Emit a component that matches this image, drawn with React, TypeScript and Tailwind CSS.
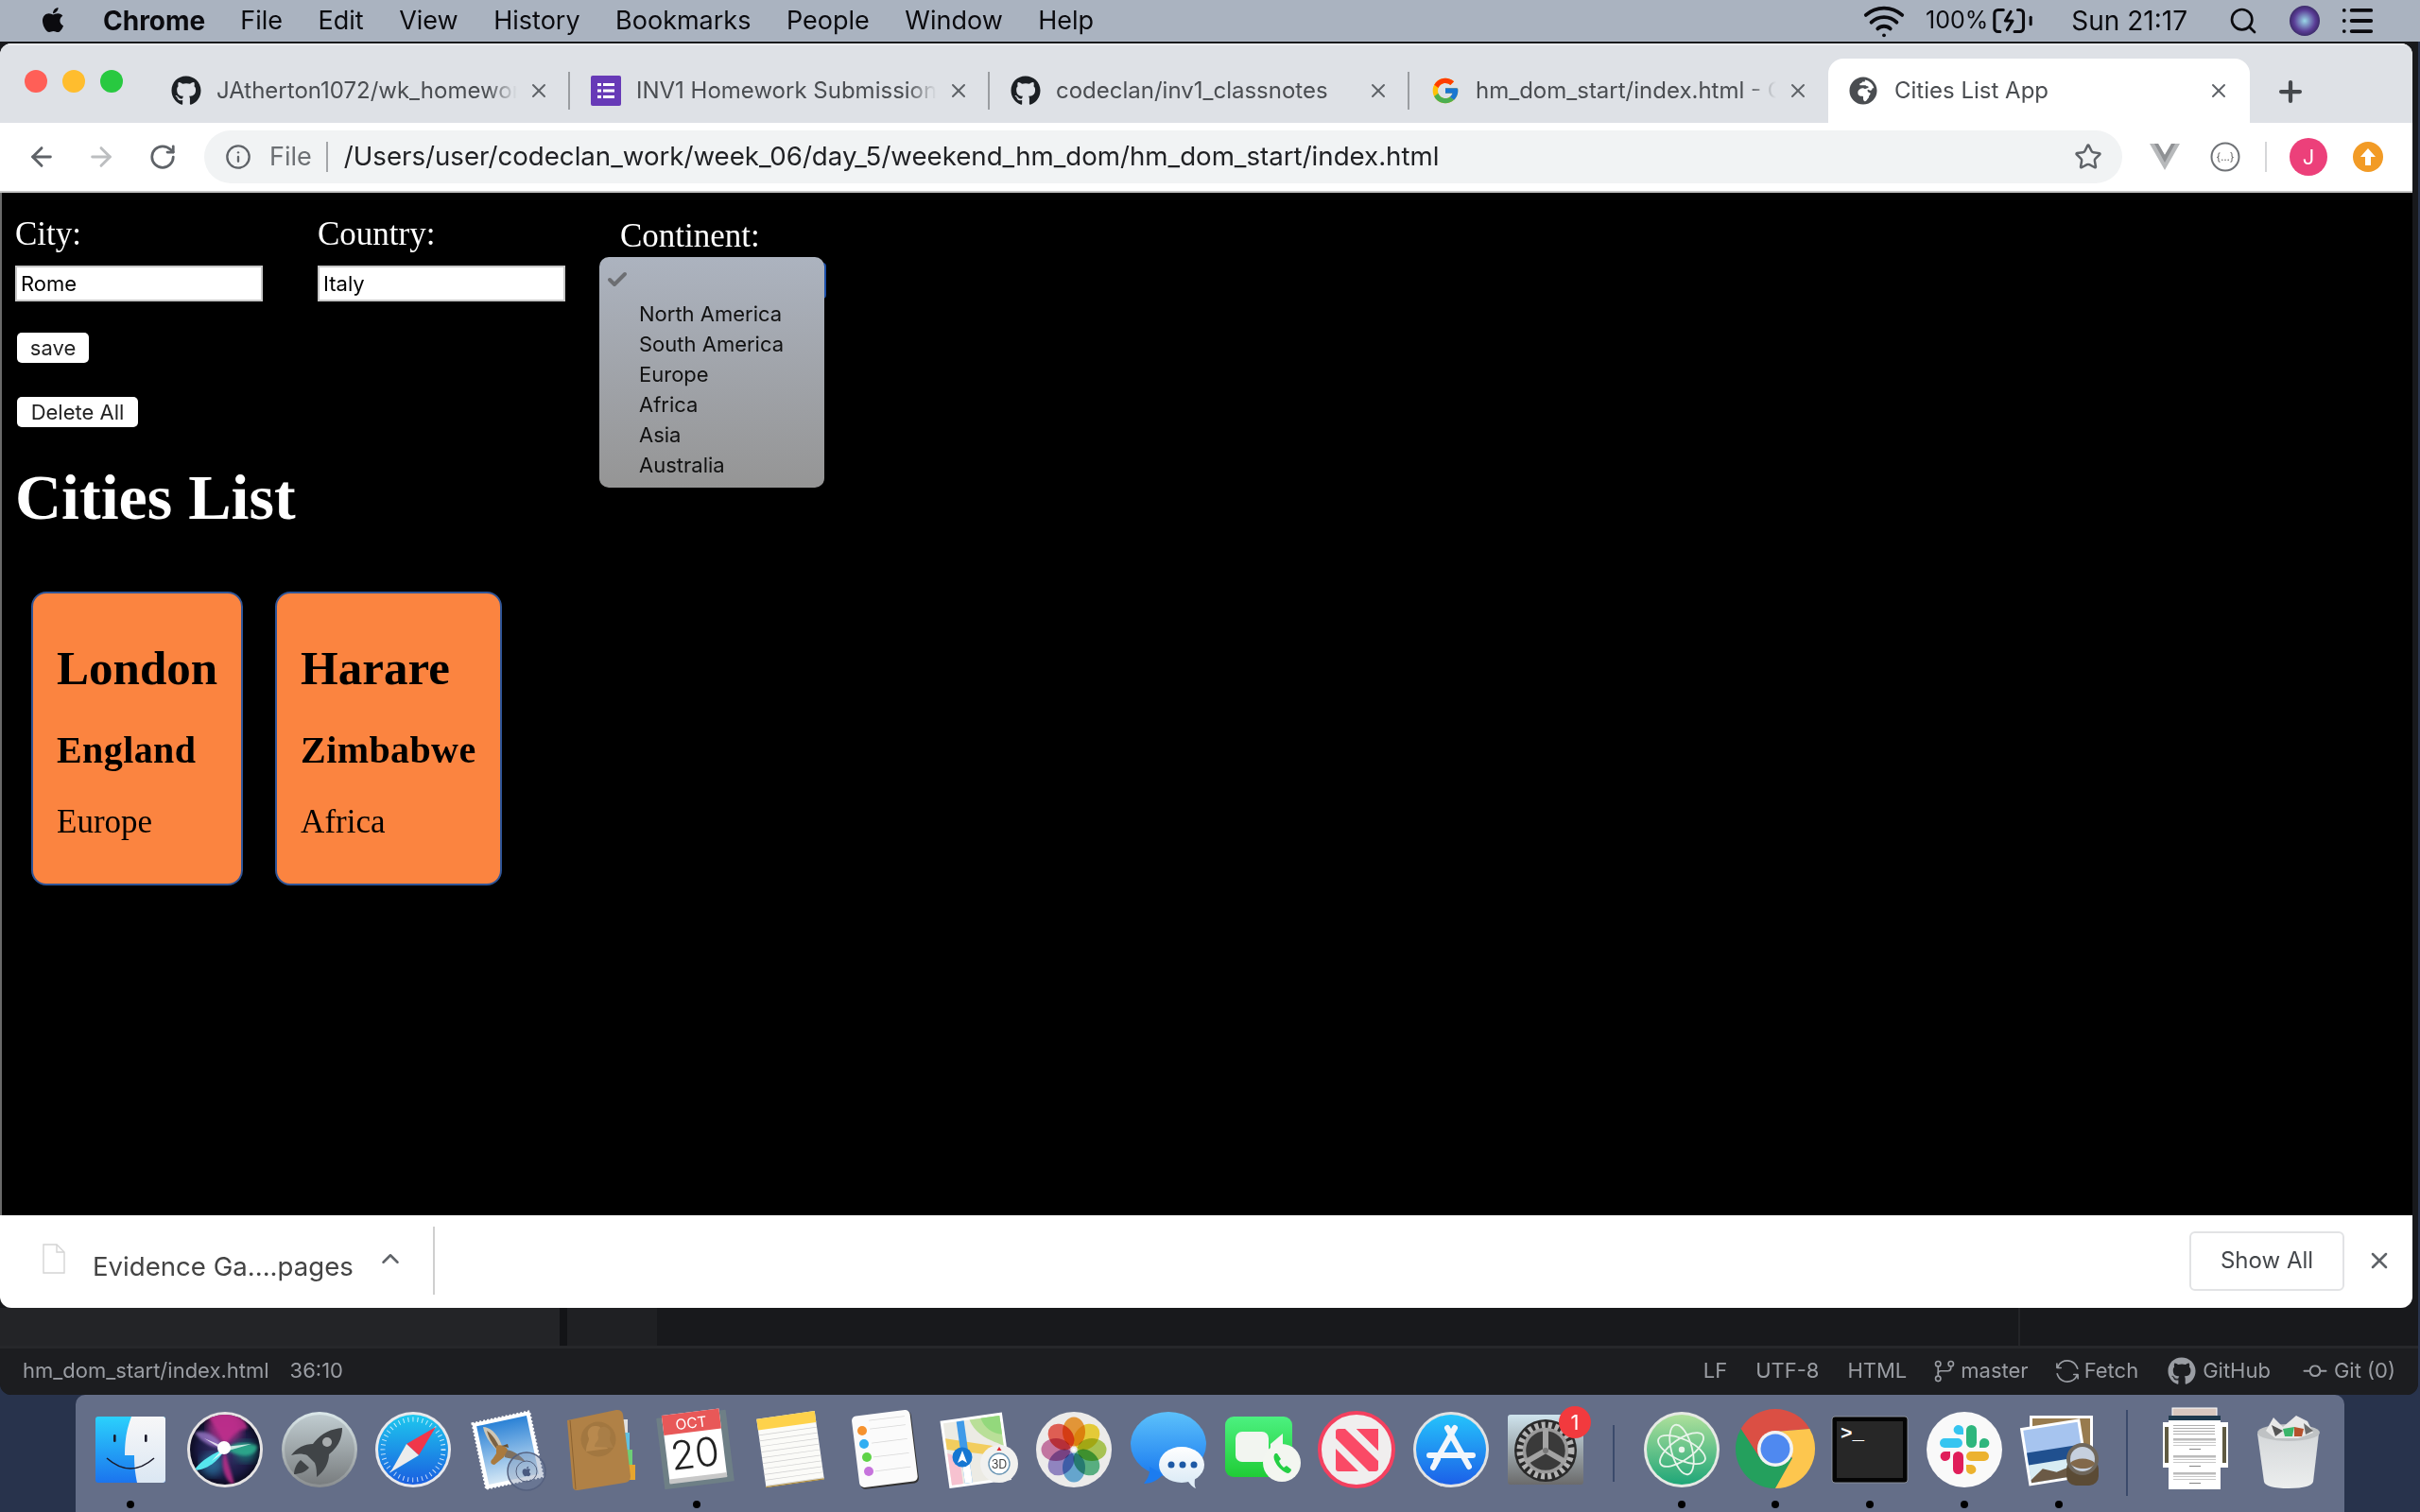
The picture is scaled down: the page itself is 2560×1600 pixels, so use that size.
import { ReactNode } from 'react';
import { ArrowLeft, ArrowRight, BatteryCharging, Check, ChevronUp, Info, List, Plus, RotateCw, Search, Star, Wifi, X } from 'lucide-react';
import { FaApple, FaGithub, FaGlobeAfrica } from 'react-icons/fa';
import { FcGoogle } from 'react-icons/fc';
import { GoGitBranch, GoGitCommit, GoSync } from 'react-icons/go';

const menuItems = ['File', 'Edit', 'View', 'History', 'Bookmarks', 'People', 'Window', 'Help'];
const continents = ['North America', 'South America', 'Europe', 'Africa', 'Asia', 'Australia'];
const cities = [
  { city: 'London', country: 'England', continent: 'Europe' },
  { city: 'Harare', country: 'Zimbabwe', continent: 'Africa' },
];

function FormsIcon() {
  return (
    <svg width="32" height="32" viewBox="0 0 32 32">
      <rect width="32" height="32" rx="2" fill="#673ab7" />
      <rect x="7" y="8" width="4" height="3" fill="#fff" />
      <rect x="13" y="8" width="12" height="3" fill="#fff" />
      <rect x="7" y="14.5" width="4" height="3" fill="#fff" />
      <rect x="13" y="14.5" width="12" height="3" fill="#fff" />
      <rect x="7" y="21" width="4" height="3" fill="#fff" />
      <rect x="13" y="21" width="12" height="3" fill="#fff" />
    </svg>
  );
}

function Tab({ icon, title, sep = true }: { icon: ReactNode; title: string; sep?: boolean }) {
  return (
    <div className="flex items-center w-[444px] h-[68px] shrink-0">
      <div className="w-[22px]" />
      <div className="w-[32px] h-[32px] flex items-center justify-center shrink-0">{icon}</div>
      <div className="w-[318px] ml-[16px] text-[#4a4d51] text-[24px] whitespace-nowrap overflow-hidden [mask-image:linear-gradient(to_right,#000_90%,transparent)]">{title}</div>
      <X size={24} strokeWidth={2} className="ml-[11px] text-[#5f6368] shrink-0" />
      <div className="flex-1" />
      {sep && <div className="w-[2px] h-[40px] bg-[#9a9da1]" />}
    </div>
  );
}

function DockSlot({ dot, children }: { dot?: boolean; children: ReactNode }) {
  return (
    <div className="w-[99.8px] shrink-0 flex flex-col items-center">
      <svg width="100" height="100" viewBox="0 0 100 100" className="overflow-visible">{children}</svg>
      {dot && <div className="mt-[4px] w-[8px] h-[8px] rounded-full bg-black" />}
    </div>
  );
}

function Dock() {
  return (
    <div className="ml-[80px] w-[2400px] h-[124px] bg-[#646e88] rounded-t-[10px] pl-[8px] pt-[8px] flex">
      <DockSlot dot>
        <defs>
          <linearGradient id="fa" x1="0" y1="0" x2="0" y2="1"><stop offset="0" stopColor="#2bd1fc" /><stop offset="1" stopColor="#1b74ee" /></linearGradient>
          <linearGradient id="fb" x1="0" y1="0" x2="0" y2="1"><stop offset="0" stopColor="#f7f7f8" /><stop offset="1" stopColor="#dbe7f3" /></linearGradient>
        </defs>
        <rect x="13" y="15" width="74" height="70" rx="3" fill="url(#fa)" />
        <path d="M51 15H84a3 3 0 0 1 3 3V82a3 3 0 0 1-3 3H57C55 75 54 68 54 56H44C44 40 46 28 51 15Z" fill="url(#fb)" />
        <rect x="32" y="34" width="2.6" height="8" rx="1.3" fill="#1a1a2a" />
        <rect x="65" y="34" width="2.6" height="8" rx="1.3" fill="#1a1a2a" />
        <path d="M25 59Q50 81 75 59" fill="none" stroke="#1a1a2a" strokeWidth="1.6" />
      </DockSlot>
      <DockSlot>
        <defs>
          <radialGradient id="sa"><stop offset="0" stopColor="#3d3570" /><stop offset="0.75" stopColor="#1b1a44" /><stop offset="1" stopColor="#0c0c22" /></radialGradient>
          <filter id="sb"><feGaussianBlur stdDeviation="1.6" /></filter>
          <filter id="sc"><feGaussianBlur stdDeviation="0.7" /></filter>
          <filter id="se"><feGaussianBlur stdDeviation="5" /></filter>
          <clipPath id="sd"><circle cx="50" cy="50" r="37" /></clipPath>
        </defs>
        <circle cx="50" cy="50" r="40" fill="#e6e4e4" />
        <circle cx="50" cy="50" r="37" fill="url(#sa)" />
        <g clipPath="url(#sd)">
          <circle cx="50" cy="26" r="18" fill="#c0308f" opacity=".8" filter="url(#se)" />
          <circle cx="72" cy="52" r="11" fill="#1f8f80" opacity=".7" filter="url(#se)" />
          <circle cx="36" cy="66" r="12" fill="#2a7fa8" opacity=".7" filter="url(#se)" />
          <path d="M28 10C50 6 72 14 74 28C62 28 54 38 50 48C46 34 38 22 28 10Z" fill="#bf2f8c" opacity=".85" filter="url(#sb)" />
          <path d="M18 32C30 28 42 36 49 48C38 48 26 44 18 32Z" fill="#9a78c8" opacity=".8" filter="url(#sb)" />
          <path d="M50 49C60 42 74 42 84 46C84 58 66 60 50 49Z" fill="#2fb08f" opacity=".85" filter="url(#sb)" />
          <path d="M50 51C52 62 58 76 60 88C50 84 44 66 50 51Z" fill="#b62d87" opacity=".9" filter="url(#sb)" />
          <path d="M50 49C38 54 26 60 17 72C30 72 44 62 50 49Z" fill="#56e6ee" filter="url(#sc)" />
          <path d="M28 38L49 47L78 44L50 52L36 62L47 50Z" fill="#fff" opacity=".75" filter="url(#sc)" />
          <circle cx="49" cy="48" r="7" fill="#fff" filter="url(#sc)" />
        </g>
      </DockSlot>
      <DockSlot>
        <defs>
          <linearGradient id="la" x1="0" y1="0" x2="0" y2="1"><stop offset="0" stopColor="#dbe8ea" /><stop offset="1" stopColor="#8a8e90" /></linearGradient>
          <linearGradient id="lb" x1="0" y1="0" x2="0" y2="1"><stop offset="0" stopColor="#c0ccd0" /><stop offset="1" stopColor="#797d7f" /></linearGradient>
        </defs>
        <circle cx="50" cy="50" r="40" fill="url(#la)" />
        <circle cx="50" cy="50" r="37" fill="url(#lb)" />
        <path d="M74 27C62 28 51 33 43 44C34 44 26 48 20 56C26 54 32 54 37 56L45 64C47 69 47 74 47 79C55 73 60 64 60 55C70 47 74 38 74 27Z" fill="#404447" />
        <path d="M30 61C25 65 23 72 23 76C28 76 35 74 39 69Z" fill="#404447" />
        <circle cx="58" cy="42" r="5" fill="#a8acae" />
      </DockSlot>
      <DockSlot>
        <defs>
          <linearGradient id="saf" x1="0" y1="0" x2="0" y2="1"><stop offset="0" stopColor="#1ec8ee" /><stop offset="1" stopColor="#1a5ee0" /></linearGradient>
        </defs>
        <circle cx="50" cy="50" r="40" fill="#e9e9ec" />
        <circle cx="50" cy="50" r="37" fill="url(#saf)" />
        <circle cx="50" cy="50" r="32" fill="none" stroke="#fff" strokeWidth="5" strokeDasharray="1 4" opacity=".75" />
        <polygon points="74,26 43,44 56,56" fill="#f0364a" />
        <polygon points="26,74 43,44 56,56" fill="#ececec" />
      </DockSlot>
      <DockSlot>
        <defs>
          <linearGradient id="ma" x1="0" y1="0" x2="0" y2="1"><stop offset="0" stopColor="#2b82d6" /><stop offset="1" stopColor="#d4e7f5" /></linearGradient>
        </defs>
        <g transform="rotate(-12 50 50)">
          <rect x="19" y="15" width="62" height="71" fill="#fff" stroke="#fff" strokeWidth="2" strokeDasharray="2 2" />
          <rect x="23" y="19" width="54" height="63" fill="url(#ma)" />
        </g>
        <path d="M24 26C32 26 40 34 44 46L38 50C32 44 26 36 24 26Z" fill="#cfc6b4" />
        <path d="M28 30C33 33 38 40 41 47L38 49C33 43 30 37 28 30Z" fill="#7a6244" />
        <path d="M46 50C54 50 62 54 69 63C60 60 54 60 47 58Z" fill="#7f7160" />
        <path d="M38 46C42 44 48 46 50 50L46 58L36 66C32 66 31 62 34 60L38 54Z" fill="#a97a3f" />
        <path d="M44 46L50 44L51 48Z" fill="#6a5030" />
        <circle cx="70" cy="73" r="20" fill="#7388a8" fillOpacity=".35" stroke="#55617f" strokeWidth="1.5" />
        <circle cx="70" cy="73" r="11" fill="none" stroke="#55617f" strokeWidth="1" />
        <FaApple x="64" y="67" size="12" color="#4a5a80" />
      </DockSlot>
      <DockSlot>
        <rect x="68" y="18" width="9" height="14" fill="#e0e0e0" />
        <rect x="70" y="32" width="9" height="18" fill="#62c1e0" />
        <rect x="72" y="50" width="10" height="16" fill="#6dcf76" />
        <rect x="74" y="66" width="11" height="16" fill="#e6a52e" />
        <path d="M13 19L65 8Q71 7.5 72 13L80 78Q80 84 74 85L24 93Q20 93.5 19 90Z" fill="#b08146" />
        <path d="M16 19L22 92" stroke="#8c6230" strokeWidth="1" />
        <circle cx="46" cy="39" r="18.5" fill="#a27740" />
        <path d="M33 52C33 44 36 42 36 38C32 30 38 24 43 25C49 24 52 31 49 38C50 44 55 46 56 49Z" fill="#b8894e" />
        <path d="M42 47C42 42 46 42 46 37C44 30 48 25 53 26C58 27 60 32 58 38C58 42 61 45 62 48Z" fill="#a97e47" />
      </DockSlot>
      <DockSlot dot>
        <g transform="rotate(-7 48 46)">
          <rect x="11" y="12" width="74" height="76" rx="1" fill="#6e7f86" />
          <rect x="17" y="10" width="61" height="72" fill="#fff" />
          <rect x="17" y="78" width="61" height="5" fill="#c8c8c8" />
          <rect x="17" y="10" width="61" height="21" fill="#e85858" />
          <text x="47" y="27" textAnchor="middle" fontSize="15.5" fill="#fff" fontFamily="Inter, sans-serif">OCT</text>
          <text x="47" y="69" textAnchor="middle" fontSize="42" fontWeight="300" fill="#222" fontFamily="Inter, sans-serif">20</text>
        </g>
      </DockSlot>
      <DockSlot>
        <g transform="rotate(-8 50 49)">
          <rect x="19" y="13" width="62" height="73" fill="#fbfbf8" />
          <rect x="19" y="13" width="62" height="12" fill="#fed24b" />
          {[30, 36, 42, 48, 54, 60, 66, 72, 78, 84].map(y => (
            <rect key={y} x="19" y={y} width="62" height="0.7" fill="#cfcfcf" />
          ))}
          <rect x="19" y="85" width="62" height="1.3" fill="#b08e3e" />
        </g>
      </DockSlot>
      <DockSlot>
        <g transform="rotate(-7 50 50)">
          <rect x="20" y="12" width="62" height="77" rx="5" fill="#333" />
          <rect x="19" y="11" width="62" height="76" rx="5" fill="#fbfbfb" />
          {[26, 41, 56, 71].map(y => (
            <rect key={y} x="37" y={y} width="38" height="0.8" fill="#d8d8d8" />
          ))}
          <rect x="37" y="17" width="38" height="0.8" fill="#d8d8d8" />
        </g>
        <circle cx="26" cy="30" r="5" fill="#f6922e" />
        <circle cx="28" cy="44" r="5" fill="#32aef2" />
        <circle cx="31" cy="58" r="5" fill="#5fd348" />
        <circle cx="33" cy="73" r="5" fill="#c674dc" />
      </DockSlot>
      <DockSlot>
        <g transform="rotate(-8 45 50)">
          <rect x="13" y="15" width="66" height="72" fill="#fff" />
          <rect x="16" y="18" width="60" height="66" fill="#ecebe4" />
          <path d="M16 34L76 52V62L16 46Z" fill="#f2cd5e" />
          <rect x="30" y="18" width="8" height="66" fill="#3f9ae8" />
          <rect x="30" y="58" width="8" height="26" fill="#fff" />
          <path d="M16 50L28 56V84H16Z" fill="#f7c2d0" />
          <path d="M44 18H76V50C66 44 48 36 44 18Z" fill="#b9df98" />
          <path d="M56 18H76V38C66 36 58 28 56 18Z" fill="#93d87c" />
        </g>
        <circle cx="32" cy="58" r="10.5" fill="#1677d2" />
        <path d="M32 51L37 64L32 61L27 64Z" fill="#fff" />
        <circle cx="71" cy="65" r="20" fill="#f1f1ef" />
        <circle cx="71" cy="65" r="11" fill="#fff" stroke="#6a96b5" strokeWidth="1.4" />
        <text x="71" y="70" textAnchor="middle" fontSize="12.5" fill="#444" fontFamily="Inter, sans-serif">3D</text>
        <polygon points="71,47 68.5,51 73.5,51" fill="#e0242c" />
      </DockSlot>
      <DockSlot>
        <circle cx="50" cy="50" r="40" fill="#ecebea" />
        <g>
          {[
            ['#f5a23c', 0],
            ['#f7dc3d', 45],
            ['#b5d35a', 90],
            ['#5fbd8c', 135],
            ['#6db3e0', 180],
            ['#9c8fd0', 225],
            ['#d27fae', 270],
            ['#f0665a', 315],
          ].map(([c, a]) => (
            <ellipse key={a as number} cx="50" cy="31" rx="12" ry="15.5" fill={c as string} className="mix-blend-multiply" transform={`rotate(${a} 50 50)`} />
          ))}
        </g>
        <circle cx="50" cy="50" r="1.6" fill="#fff" />
      </DockSlot>
      <DockSlot>
        <defs>
          <linearGradient id="msg" x1="0" y1="0" x2="0" y2="1"><stop offset="0" stopColor="#5cc1fb" /><stop offset="1" stopColor="#1c7cf0" /></linearGradient>
          <linearGradient id="msh" x1="0" y1="0" x2="0" y2="1"><stop offset="0" stopColor="#ffffff" /><stop offset="1" stopColor="#dcebf6" /></linearGradient>
        </defs>
        <ellipse cx="50" cy="44" rx="40" ry="34" fill="url(#msg)" />
        <path d="M30 68C31 78 26 83 24 86C32 86 40 82 44 76Z" fill="#1c7cf0" />
        <ellipse cx="64" cy="66" rx="24" ry="19" fill="url(#msh)" />
        <path d="M70 82C72 86 76 90 79 91C77 87 78 84 78 80Z" fill="#e0edf7" />
        <circle cx="53" cy="66" r="3.5" fill="#1d59a5" />
        <circle cx="65" cy="66" r="3.5" fill="#1d59a5" />
        <circle cx="77" cy="66" r="3.5" fill="#1d59a5" />
      </DockSlot>
      <DockSlot>
        <defs>
          <linearGradient id="ft" x1="0" y1="0" x2="0" y2="1"><stop offset="0" stopColor="#4cf180" /><stop offset="1" stopColor="#20cc36" /></linearGradient>
        </defs>
        <rect x="11" y="15" width="71" height="64" rx="9" fill="url(#ft)" />
        <rect x="22" y="31" width="35" height="32" rx="7" fill="#f2f5f0" />
        <path d="M59 44L72 33V60L59 52Z" fill="#f2f5f0" />
        <circle cx="71" cy="64" r="20" fill="#f3f6f0" />
        <path d="M64 54C62 56 62 59 64 63C67 69 72 73 77 75C79 75 81 73 81 71L76 67L73 69C71 67 69 65 68 62L70 60L66 54Z" fill="#25cf44" />
      </DockSlot>
      <DockSlot>
        <circle cx="50" cy="50" r="39" fill="#f0eeee" stroke="#f4405f" strokeWidth="4" />
        <rect x="28" y="28" width="45" height="45" rx="3" fill="#fa4a66" />
        <path d="M28 38L63 73H52L28 49Z" fill="#f0eeee" />
        <path d="M38 28H50L73 51V62Z" fill="#f0eeee" />
        <path d="M50 28L73 51V28Z" fill="#fa4a66" />
      </DockSlot>
      <DockSlot>
        <defs>
          <linearGradient id="as" x1="0" y1="0" x2="0" y2="1"><stop offset="0" stopColor="#25c3fb" /><stop offset="1" stopColor="#1c60e8" /></linearGradient>
        </defs>
        <circle cx="50" cy="50" r="40" fill="#e2e2e2" />
        <circle cx="50" cy="50" r="37" fill="url(#as)" />
        <g stroke="#f2f6fb" strokeWidth="6" strokeLinecap="round" fill="none">
          <path d="M54 27L34 62" />
          <path d="M46 27L69 68" />
          <path d="M27 56H73" />
          <path d="M36 60L31 69" />
        </g>
      </DockSlot>
      <DockSlot>
        <defs>
          <linearGradient id="sp" x1="0" y1="0" x2="0" y2="1"><stop offset="0" stopColor="#cfe4ee" /><stop offset="1" stopColor="#6b6b6b" /></linearGradient>
        </defs>
        <rect x="10" y="13" width="80" height="74" rx="3" fill="url(#sp)" />
        <circle cx="50" cy="51" r="33" fill="#2a2a2a" />
        <circle cx="50" cy="51" r="27" fill="none" stroke="#b5b5b5" strokeWidth="7" strokeDasharray="4 3.2" />
        <circle cx="50" cy="51" r="22.5" fill="#3a3a3a" stroke="#9a9a9a" strokeWidth="3.5" />
        <g stroke="#a3a3a3" strokeWidth="6" strokeLinecap="round">
          <path d="M50 51V30" />
          <path d="M50 51L31 62" />
          <path d="M50 51L69 62" />
        </g>
        <circle cx="50" cy="51" r="3" fill="#777" />
        <circle cx="81" cy="21" r="17" fill="#f23a3e" />
        <text x="81" y="29" textAnchor="middle" fontSize="22" fill="#fff" fontFamily="Inter, sans-serif">1</text>
      </DockSlot>
      <div className="w-[44px] shrink-0 flex justify-center pt-[24px]">
        <div className="w-[2px] h-[60px] bg-[#3b4a6b]" />
      </div>
      <DockSlot dot>
        <defs>
          <linearGradient id="at" x1="0" y1="0" x2="0" y2="1"><stop offset="0" stopColor="#aee09b" /><stop offset="1" stopColor="#1fa678" /></linearGradient>
        </defs>
        <circle cx="50" cy="50" r="40" fill="#e6e9e4" />
        <circle cx="50" cy="50" r="37" fill="url(#at)" />
        <g fill="none" stroke="#e8f4ea" strokeWidth="1.8">
          <ellipse cx="50" cy="50" rx="27" ry="11" transform="rotate(25 50 50)" />
          <ellipse cx="50" cy="50" rx="27" ry="11" transform="rotate(-35 50 50)" />
          <ellipse cx="50" cy="50" rx="27" ry="11" transform="rotate(75 50 50)" />
        </g>
        <circle cx="50" cy="50" r="3.2" fill="#e8f4ea" />
      </DockSlot>
      <DockSlot dot>
        <path d="M13.6 28A42 42 0 0 1 86.4 28L50 31L33 58Z" fill="#db4f44" />
        <path d="M13.6 28L33 58L68 59L50 91A42 42 0 0 1 13.6 28Z" fill="#24a05d" />
        <path d="M86.4 28L50 31L68 59L50 91A42 42 0 0 0 86.4 28Z" fill="#fdc64e" />
        <circle cx="50" cy="49" r="19" fill="#f3f3f3" />
        <circle cx="50" cy="49" r="15.5" fill="#4f89f0" />
      </DockSlot>
      <DockSlot dot>
        <rect x="10" y="15" width="80" height="70" rx="3" fill="#050505" stroke="#9aa0a8" strokeWidth="0.8" />
        <rect x="15" y="20" width="70" height="60" fill="#272727" />
        <text x="19" y="39" fontSize="21" fontWeight="700" fill="#fff" fontFamily="'Liberation Mono', monospace">&gt;_</text>
      </DockSlot>
      <DockSlot dot>
        <circle cx="50" cy="50" r="40" fill="#f9f9f9" />
        <rect x="24" y="38" width="24" height="10" rx="5" fill="#36c5f0" />
        <path d="M49 34H43.5a5.2 5 0 1 1 5.5-5Z" fill="#36c5f0" />
        <rect x="52" y="24" width="11" height="24" rx="5.5" fill="#2eb67d" />
        <path d="M66 48V43a5.2 5 0 1 1 5 5Z" fill="#2eb67d" />
        <path d="M35 52V57a5.2 5 0 1 1-5-5Z" fill="#e01e5a" />
        <rect x="38" y="52" width="11" height="24" rx="5.5" fill="#e01e5a" />
        <rect x="52" y="52" width="24" height="10" rx="5" fill="#ecb22e" />
        <path d="M52 66H57.5a5.2 5 0 1 1-5.5 5Z" fill="#ecb22e" />
      </DockSlot>
      <DockSlot dot>
        <rect x="19" y="14" width="67" height="60" fill="#fff" />
        <rect x="22" y="17" width="61" height="54" fill="#a78a58" />
        <rect x="22" y="17" width="61" height="54" fill="#6b5030" fillOpacity=".25" />
        <g transform="rotate(-9 45 51)">
          <rect x="13" y="22" width="64" height="62" fill="#fff" />
          <rect x="16" y="25" width="58" height="56" fill="#a6c4ef" />
          <rect x="16" y="49" width="58" height="14" fill="#20508f" />
          <rect x="16" y="62" width="58" height="19" fill="#d8ecf3" />
          <path d="M16 78L30 68L44 74L60 70L74 78V81H16Z" fill="#6b5a46" />
        </g>
        <rect x="58" y="60" width="34" height="28" rx="10" fill="#5b4b35" />
        <circle cx="75" cy="60" r="17" fill="#6f675c" />
        <circle cx="75" cy="60" r="13" fill="#c6d0de" />
        <path d="M62 64C68 58 82 58 88 64C86 72 66 72 62 64Z" fill="#82684a" />
      </DockSlot>
      <div className="w-[44px] shrink-0 flex justify-center pt-[8px]">
        <div className="w-[2px] h-[91px] bg-[#3b4a6b]" />
      </div>
      <DockSlot>
        <rect x="26" y="6" width="47" height="14" fill="#d9c8bf" stroke="#fff" />
        <rect x="16" y="21" width="69" height="48" fill="#fff" />
        <rect x="18" y="26" width="4" height="38" fill="#5f5a42" />
        <rect x="79" y="26" width="4" height="38" fill="#5f5a42" />
        <rect x="22" y="14" width="55" height="5" fill="#1f3a4d" />
        <rect x="22" y="19" width="55" height="73" fill="#fff" />
        {[24, 27, 30, 33].map(y => (
          <rect key={y} x="27" y={y} width="44" height="0.8" fill="#9a9a9a" />
        ))}
        {[38, 56, 74].map(y => (
          <g key={y}>
            <rect x="27" y={y} width="45" height="2.5" fill="#bbb" />
            <rect x="27" y={y + 4} width="45" height="0.8" fill="#bbb" />
            <rect x="27" y={y + 7} width="45" height="0.8" fill="#bbb" />
            <rect x="44" y={y + 11} width="12" height="0.9" fill="#777" />
          </g>
        ))}
      </DockSlot>
      <DockSlot>
        <defs>
          <linearGradient id="tr" x1="0" y1="0" x2="0" y2="1"><stop offset="0" stopColor="#d5d8da" /><stop offset="1" stopColor="#eceeee" /></linearGradient>
        </defs>
        <path d="M17 33L24 84Q26 91 50 91Q74 91 76 84L82 33Z" fill="url(#tr)" />
        <ellipse cx="50" cy="32" rx="33" ry="9" fill="#bfc2c4" />
        <path d="M26 30L34 16L44 26L58 14L70 20L76 32L60 38L36 38Z" fill="#e8e8e8" />
        <path d="M32 24L44 30L36 36Z" fill="#555" />
        <path d="M44 28L56 26L54 36L46 36Z" fill="#3bb56a" />
        <path d="M56 26L66 28L64 36L56 36Z" fill="#b5522d" />
        <path d="M66 22L76 30L68 34Z" fill="#6a6a6a" />
      </DockSlot>
    </div>
  );
}

function CityCard({ city, country, continent }: { city: string; country: string; continent: string }) {
  return (
    <div className="h-[311px] rounded-[16px] border-[2px] border-[#2f5597] bg-[#fb8440] px-[25px] text-black">
      <h2 className="mt-[49px] text-[51px] leading-[60px] font-bold">{city}</h2>
      <h3 className="mt-[34px] text-[40px] leading-[46px] font-bold tracking-[0.4px]">{country}</h3>
      <p className="mt-[32px] text-[35px] leading-[42px]">{continent}</p>
    </div>
  );
}

export default function App() {
  return (
    <div className="w-[2560px] h-[1600px] overflow-hidden bg-[#28334c] [font-family:Inter,sans-serif]">
      <div className="h-[44px] bg-[#aab3c0] flex items-center text-[#0b0b0f] text-[27px]">
        <FaApple size={30} className="ml-[41px] mb-[3px]" />
        <div className="ml-[38px] font-bold text-[28px]">Chrome</div>
        <div className="ml-[37px] flex gap-[37.5px]">
          {menuItems.map(item => <span key={item}>{item}</span>)}
        </div>
        <div className="flex-1" />
        <Wifi size={46} strokeWidth={2} />
        <span className="ml-[21px] text-[25px]">100%</span>
        <BatteryCharging size={46} strokeWidth={1.6} className="ml-[3px]" />
        <span className="ml-[39px] text-[28px]">Sun 21:17</span>
        <Search size={32} strokeWidth={2} className="ml-[43px]" />
        <div className="ml-[33px] w-[32px] h-[32px] rounded-full bg-[radial-gradient(circle,#9ad8e8,#5a3d96_50%,#11122c)]" />
        <List size={38} strokeWidth={2.4} className="ml-[21px] mr-[47px]" />
      </div>

      <div className="h-[1432px] bg-[#18191c] rounded-b-[12px] mr-[2px]">
        <div className="h-[2px]" />
        <div className="w-[2552px] h-[1338px] rounded-t-[12px] rounded-b-[12px] overflow-hidden flex flex-col bg-white">
          <div className="h-[84px] bg-[#dee1e6] flex items-end border-t-[2px] border-[#eceef0]">
            <div className="w-[159px] h-full shrink-0 flex items-center gap-[16px] pl-[26px] pb-[6px]">
              <div className="w-[24px] h-[24px] rounded-full bg-[#ff5f57] shrink-0" />
              <div className="w-[24px] h-[24px] rounded-full bg-[#ffbd2e] shrink-0" />
              <div className="w-[24px] h-[24px] rounded-full bg-[#28c940] shrink-0" />
            </div>
            <Tab icon={<FaGithub size={32} color="#1b1f23" />} title="JAtherton1072/wk_homework" />
            <Tab icon={<FormsIcon />} title="INV1 Homework Submission" />
            <Tab icon={<FaGithub size={32} color="#1b1f23" />} title="codeclan/inv1_classnotes" />
            <Tab icon={<FcGoogle size={32} />} title="hm_dom_start/index.html - Google" sep={false} />
            <div className="w-[446px] h-[68px] -ml-[1px] bg-white rounded-t-[16px] flex items-center shrink-0">
              <div className="w-[22px]" />
              <FaGlobeAfrica size={30} color="#4a4d51" />
              <div className="ml-[18px] text-[#4a4d51] text-[24px]">Cities List App</div>
              <div className="flex-1" />
              <X size={24} strokeWidth={2} className="mr-[21px] text-[#5f6368]" />
            </div>
            <Plus size={34} strokeWidth={3} className="ml-[26px] mb-[16px] text-[#45484c]" />
          </div>

          <div className="h-[74px] flex items-center pl-[28px] border-b-[2px] border-[#c6c6c6]">
            <ArrowLeft size={32} strokeWidth={2.2} className="text-[#5f6368]" />
            <ArrowRight size={32} strokeWidth={2.2} className="ml-[31px] text-[#bcbec0]" />
            <RotateCw size={30} strokeWidth={2.2} className="ml-[34px] text-[#5f6368]" />
            <div className="ml-[29px] w-[2029px] h-[56px] rounded-full bg-[#f1f3f4] flex items-center pl-[22px]">
              <Info size={28} strokeWidth={2} className="text-[#5f6368]" />
              <span className="ml-[19px] text-[#6d7074] text-[27px]">File</span>
              <div className="ml-[15px] w-[2px] h-[32px] bg-[#a4a6a9]" />
              <span className="ml-[17px] text-[#202124] text-[27.65px] whitespace-nowrap">/Users/user/codeclan_work/week_06/day_5/weekend_hm_dom/hm_dom_start/index.html</span>
              <div className="flex-1" />
              <Star size={30} strokeWidth={2} className="mr-[21px] text-[#5f6368]" />
            </div>
            <svg width="32" height="32" viewBox="0 0 32 32" className="ml-[29px]">
              <polygon points="0,2 9,2 16,14 23,2 32,2 16,30" fill="#b7b9bb" />
              <polygon points="9,2 16,14 23,2 27,2 16,22 5,2" fill="#8f9194" />
            </svg>
            <svg width="32" height="32" viewBox="0 0 32 32" className="ml-[32px]">
              <circle cx="16" cy="16" r="14.5" fill="#fff" stroke="#6f7276" strokeWidth="2" />
              <text x="16" y="20" textAnchor="middle" fontSize="11" fill="#555" fontFamily="Inter, sans-serif">{'{…}'}</text>
            </svg>
            <div className="ml-[26px] w-[2px] h-[32px] bg-[#d6d7d9]" />
            <div className="ml-[24px] w-[40px] h-[40px] rounded-full bg-[#ec407a] flex items-center justify-center text-white text-[22px]">J</div>
            <div className="ml-[27px] w-[32px] h-[32px] rounded-full bg-[#f29b26] flex items-center justify-center">
              <svg width="18" height="20" viewBox="0 0 18 20"><path d="M9 1L17 10H12V19H6V10H1Z" fill="#fff" /></svg>
            </div>
          </div>

          <main className="relative h-[1082px] bg-black border-l-[2px] border-[#6a6a6a] pl-[14px] [font-family:'Liberation_Serif',serif] text-white">
            <div className="flex pt-[23px]">
              <div className="w-[320px]">
                <label className="block h-[42px] text-[35px] leading-[42px]">City:</label>
                <input readOnly value="Rome" className="mt-[12px] block w-[262px] h-[38px] bg-white border-[2px] border-[#c8c8c8] pl-[4px] text-black text-[22px] [font-family:Inter,sans-serif]" />
              </div>
              <div className="w-[320px]">
                <label className="block h-[42px] text-[35px] leading-[42px]">Country:</label>
                <input readOnly value="Italy" className="mt-[12px] block w-[262px] h-[38px] bg-white border-[2px] border-[#c8c8c8] pl-[4px] text-black text-[22px] [font-family:Inter,sans-serif]" />
              </div>
              <div className="mt-[2px]">
                <label className="block h-[42px] text-[35px] leading-[42px]">Continent:</label>
              </div>
            </div>
            <button className="mt-[33px] ml-[2px] block w-[76px] h-[32px] bg-white rounded-[5px] text-[#222] text-[22px] [font-family:Inter,sans-serif]">save</button>
            <button className="mt-[36px] ml-[2px] block w-[128px] h-[32px] bg-white rounded-[5px] text-[#222] text-[22px] [font-family:Inter,sans-serif]">Delete All</button>
            <h1 className="mt-[36px] text-[68px] leading-[76px] font-bold">Cities List</h1>
            <div className="mt-[62px] ml-[17px] flex gap-[34px] items-start">
              {cities.map(c => <CityCard key={c.city} {...c} />)}
            </div>

            <div className="absolute left-[865px] top-[74px] w-[7px] h-[38px] bg-[#1c4fa8] rounded-r-[4px]" />
            <div className="absolute left-[632px] top-[68px] w-[238px] h-[244px] rounded-[10px] bg-gradient-to-b from-[#acb3bf] to-[#959595] [font-family:Inter,sans-serif] text-[#111] text-[22px]">
              <div className="h-[44px] pl-[7px] pt-[4px] flex items-center text-[#6c6e72]"><Check size={24} strokeWidth={4} /></div>
              {continents.map(c => (
                <div key={c} className="h-[32px] leading-[32px] pl-[42px]">{c}</div>
              ))}
            </div>
          </main>

          <div className="h-[96px] bg-white flex items-center rounded-b-[12px]">
            <svg width="24" height="32" viewBox="0 0 24 32" className="ml-[45px] mb-[4px]">
              <path d="M1 1H15L23 9V31H1Z" fill="#fff" stroke="#d4d4d4" strokeWidth="1.4" />
              <path d="M15 1V9H23" fill="none" stroke="#d4d4d4" strokeWidth="1.4" />
            </svg>
            <span className="ml-[29px] mt-[13px] text-[#444] text-[27.6px] whitespace-nowrap">Evidence Ga....pages</span>
            <ChevronUp size={30} strokeWidth={2} className="ml-[24px] mb-[4px] text-[#5f6368]" />
            <div className="ml-[30px] w-[2px] h-[72px] bg-[#cfcfcf]" />
            <div className="flex-1" />
            <button className="w-[164px] h-[63px] rounded-[6px] border-[2px] border-[#e2e3e5] text-[#44474b] text-[24px]">Show All</button>
            <X size={28} strokeWidth={2.2} className="ml-[23px] mr-[21px] text-[#5f6368]" />
          </div>
        </div>

        <div className="h-[40px] flex">
          <div className="w-[592px] bg-[#232427]" />
          <div className="w-[8px] bg-[#131417]" />
          <div className="w-[95px] bg-[#1f2023]" />
          <div className="w-[1442px] bg-[#18191c] border-r-[2px] border-[#232427]" />
        </div>
        <div className="h-[52px] border-t-[3px] border-t-[#26272a] bg-[#1c1d20] rounded-b-[12px] flex items-center px-[24px] pb-[2px] text-[#9a9da3] text-[22px]">
          <span>hm_dom_start/index.html</span>
          <span className="ml-[22px]">36:10</span>
          <div className="flex-1" />
          <span>LF</span>
          <span className="ml-[30px]">UTF-8</span>
          <span className="ml-[30px]">HTML</span>
          <GoGitBranch size={26} className="ml-[27px]" />
          <span className="ml-[4px]">master</span>
          <GoSync size={26} className="ml-[28px]" />
          <span className="ml-[5px]">Fetch</span>
          <FaGithub size={30} className="ml-[31px]" />
          <span className="ml-[7px]">GitHub</span>
          <GoGitCommit size={30} className="ml-[32px]" />
          <span className="ml-[5px]">Git (0)</span>
        </div>
      </div>

      <Dock />
    </div>
  );
}
